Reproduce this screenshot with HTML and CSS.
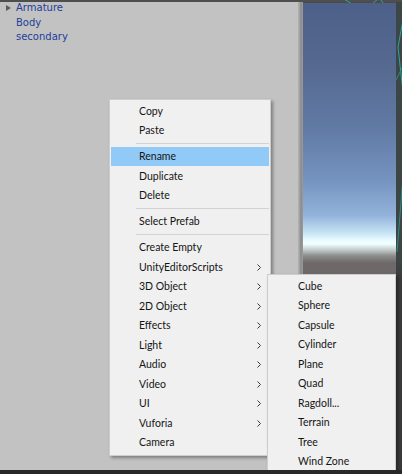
FILE: index.html
```html
<!DOCTYPE html>
<html>
<head>
<meta charset="utf-8">
<link rel="stylesheet" href="styles.css">
</head>
<body>
<div class="app">
  <div class="topbar">
    <svg class="topbar-lines" width="402" height="3" viewBox="0 0 402 3">
      <line x1="344" y1="-1" x2="352" y2="4" stroke="#2aa69c" stroke-width="1"/>
      <line x1="372" y1="4" x2="378" y2="-1" stroke="#2aa69c" stroke-width="1"/>
      <line x1="380" y1="-1" x2="384" y2="4" stroke="#2aa69c" stroke-width="1"/>
    </svg>
  </div>
  <div class="main">
    <div class="hierarchy">
      <div class="tree">
        <div class="row"><span class="indent"><span class="tri"></span></span><span class="name">Armature</span></div>
        <div class="row"><span class="indent"></span><span class="name">Body</span></div>
        <div class="row"><span class="indent"></span><span class="name">secondary</span></div>
      </div>
    </div>
    <div class="gutter"></div>
    <div class="scene"></div>
    <div class="edge">
      <svg width="6" height="468" viewBox="0 0 6 468">
        <line x1="7" y1="18" x2="2" y2="45" stroke="#2aa69c" stroke-width="1"/>
        <line x1="2" y1="45" x2="7" y2="90" stroke="#2aa69c" stroke-width="1"/>
        <line x1="0" y1="78" x2="7" y2="64" stroke="#2a8f88" stroke-width="1"/>
        <line x1="7" y1="175" x2="1" y2="250" stroke="#2a8f88" stroke-width="1"/>
      </svg>
    </div>
  </div>
  <div class="bottombar"></div>

  <div class="menu menu-main">
    <div class="item"><span>Copy</span></div>
    <div class="item"><span>Paste</span></div>
    <div class="sep"></div>
    <div class="item active"><span>Rename</span></div>
    <div class="item"><span>Duplicate</span></div>
    <div class="item"><span>Delete</span></div>
    <div class="sep"></div>
    <div class="item"><span>Select Prefab</span></div>
    <div class="sep"></div>
    <div class="item"><span>Create Empty</span></div>
    <div class="item"><span>UnityEditorScripts</span><svg class="chev" width="4" height="7" viewBox="0 0 4 7"><polyline points="0.5,0.5 3.5,3.5 0.5,6.5" fill="none" stroke="#3a3a3a" stroke-width="1"/></svg></div>
    <div class="item"><span>3D Object</span><svg class="chev" width="4" height="7" viewBox="0 0 4 7"><polyline points="0.5,0.5 3.5,3.5 0.5,6.5" fill="none" stroke="#3a3a3a" stroke-width="1"/></svg></div>
    <div class="item"><span>2D Object</span><svg class="chev" width="4" height="7" viewBox="0 0 4 7"><polyline points="0.5,0.5 3.5,3.5 0.5,6.5" fill="none" stroke="#3a3a3a" stroke-width="1"/></svg></div>
    <div class="item"><span>Effects</span><svg class="chev" width="4" height="7" viewBox="0 0 4 7"><polyline points="0.5,0.5 3.5,3.5 0.5,6.5" fill="none" stroke="#3a3a3a" stroke-width="1"/></svg></div>
    <div class="item"><span>Light</span><svg class="chev" width="4" height="7" viewBox="0 0 4 7"><polyline points="0.5,0.5 3.5,3.5 0.5,6.5" fill="none" stroke="#3a3a3a" stroke-width="1"/></svg></div>
    <div class="item"><span>Audio</span><svg class="chev" width="4" height="7" viewBox="0 0 4 7"><polyline points="0.5,0.5 3.5,3.5 0.5,6.5" fill="none" stroke="#3a3a3a" stroke-width="1"/></svg></div>
    <div class="item"><span>Video</span><svg class="chev" width="4" height="7" viewBox="0 0 4 7"><polyline points="0.5,0.5 3.5,3.5 0.5,6.5" fill="none" stroke="#3a3a3a" stroke-width="1"/></svg></div>
    <div class="item"><span>UI</span><svg class="chev" width="4" height="7" viewBox="0 0 4 7"><polyline points="0.5,0.5 3.5,3.5 0.5,6.5" fill="none" stroke="#3a3a3a" stroke-width="1"/></svg></div>
    <div class="item"><span>Vuforia</span><svg class="chev" width="4" height="7" viewBox="0 0 4 7"><polyline points="0.5,0.5 3.5,3.5 0.5,6.5" fill="none" stroke="#3a3a3a" stroke-width="1"/></svg></div>
    <div class="item"><span>Camera</span></div>
  </div>

  <div class="menu menu-sub">
    <div class="item"><span>Cube</span></div>
    <div class="item"><span>Sphere</span></div>
    <div class="item"><span>Capsule</span></div>
    <div class="item"><span>Cylinder</span></div>
    <div class="item"><span>Plane</span></div>
    <div class="item"><span>Quad</span></div>
    <div class="item"><span>Ragdoll...</span></div>
    <div class="item"><span>Terrain</span></div>
    <div class="item"><span>Tree</span></div>
    <div class="item"><span>Wind Zone</span></div>
  </div>
</div>
</body>
</html>
```

FILE: styles.css
```css
html, body {
  margin: 0;
  padding: 0;
  width: 402px;
  height: 474px;
  overflow: hidden;
  background: #3a3a3a;
}

.app {
  position: relative;
  width: 402px;
  height: 474px;
  display: flex;
  flex-direction: column;
  overflow: hidden;
}

.topbar {
  height: 2px;
  background: #4e4e4e;
  position: relative;
  z-index: 3;
  overflow: visible;
}

.topbar-lines {
  display: block;
}

.main {
  flex: 1;
  display: flex;
  min-height: 0;
}

.hierarchy {
  width: 298px;
  background: #c2c2c2;
}

.tree {
  display: flex;
  flex-direction: column;
}

.row {
  display: flex;
  height: 14.5px;
  line-height: 11px;
  font-family: "DejaVu Sans", Verdana, sans-serif;
  font-size: 10px;
  color: #233d9a;
}

.indent {
  width: 16px;
  flex: none;
  position: relative;
}

.tri {
  display: block;
  width: 0;
  height: 0;
  margin-left: 6px;
  margin-top: 2.5px;
  border-top: 3px solid transparent;
  border-bottom: 3px solid transparent;
  border-left: 5px solid #5c5c5c;
}

.gutter {
  width: 5px;
  background: linear-gradient(to right, #b4b4b4, #a2a2a2 30%, #8a8a8a 60%, #9c9c9c);
}

.scene {
  width: 93px;
  border-top: 1px solid #4a4a4a;
  background: linear-gradient(to bottom,
    #4d6089 0px,
    #55688f 60px,
    #617ba5 127px,
    #7593bf 177px,
    #92b2da 212px,
    #c3e1f3 229px,
    #e8fbff 237px,
    #f2ffff 241px,
    #c2caca 247px,
    #8b8b8b 253px,
    #6e6868 260px,
    #6b6565 100%);
}

.edge {
  width: 6px;
  background: linear-gradient(to bottom, #3d4646 0px, #3c4444 260px, #3a3a3a 280px, #3a3a3a 100%);
}

.edge svg {
  display: block;
}

.bottombar {
  height: 4px;
  background: #282828;
  position: relative;
  z-index: 3;
}

.menu {
  position: absolute;
  box-sizing: border-box;
  background: #f0f0f0;
  border: 1px solid #cdcdcd;
  font-family: Lato, "Open Sans", sans-serif;
  font-size: 10.5px;
  color: #151515;
}

.menu-main {
  left: 109px;
  top: 99px;
  width: 162px;
  padding: 1.25px 1px 2.25px 1px;
  box-shadow: 2px 2px 3px rgba(0, 0, 0, 0.35);
  z-index: 1;
}

.menu-sub {
  left: 267px;
  top: 274px;
  width: 129px;
  padding: 1.25px 1px 1px 1px;
  box-shadow: 2px 2px 3px rgba(0, 0, 0, 0.35);
  z-index: 2;
}

.item {
  height: 19.5px;
  line-height: 19.5px;
  padding-left: 28px;
  padding-right: 8px;
  display: flex;
  align-items: center;
  justify-content: space-between;
  white-space: nowrap;
}

.item span {
  padding-top: 1px;
}

.menu-sub .item {
  padding-left: 29px;
}

.item.active {
  background: #91c9f7;
}

.chev {
  display: block;
  flex: none;
}

.sep {
  height: 6.5px;
  margin-left: 25px;
  display: flex;
  align-items: center;
}

.sep::before {
  content: "";
  display: block;
  width: 100%;
  height: 1px;
  background: #d2d2d2;
}
```
